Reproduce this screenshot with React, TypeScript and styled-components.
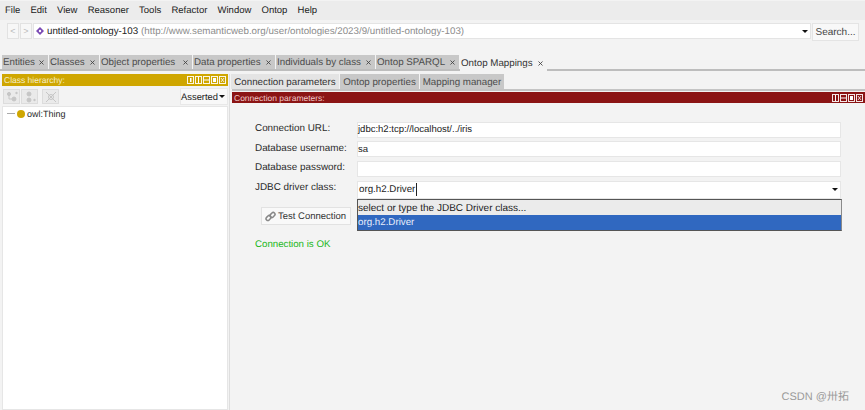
import React from "react";
import styled, { createGlobalStyle } from "styled-components";
import { X } from "lucide-react";

const topTabs = [
  { name: "Entities", width: 46 },
  { name: "Classes", width: 50 },
  { name: "Object properties", width: 92 },
  { name: "Data properties", width: 82 },
  { name: "Individuals by class", width: 99 },
  { name: "Ontop SPARQL", width: 83 },
  { name: "Ontop Mappings", width: 87, active: true },
];

const subTabs = [
  { name: "Connection parameters", width: 108, active: true },
  { name: "Ontop properties", width: 79 },
  { name: "Mapping manager", width: 84 },
];

const GlobalStyle = createGlobalStyle`
  html, body {
    margin: 0;
    padding: 0;
    background: #f3f3f3;
    overflow: hidden;
  }
  * {
    box-sizing: border-box;
  }
`;

const Page = styled.div`
  position: relative;
  width: 865px;
  height: 410px;
  overflow: hidden;
  background: #f3f3f3;
  color: #2a2a2a;
  font-family: "Liberation Sans", Arial, sans-serif;
  font-size: 9.75px;
  text-rendering: geometricPrecision;
  white-space: nowrap;
`;

const MenuBar = styled.div`
  display: flex;
  align-items: center;
  gap: 10.2px;
  height: 19px;
  margin-top: 1px;
  padding-left: 5px;
  background: #ececec;
  font-size: 9.5px;
`;

const MenuItem = styled.span`
  color: #222;
`;

const AddressRow = styled.div`
  display: flex;
  align-items: flex-start;
  height: 18px;
  margin-top: 3px;
  padding-left: 7px;
`;

const NavButton = styled.div`
  display: flex;
  align-items: center;
  justify-content: center;
  width: 12px;
  height: 16px;
  margin-right: 1px;
  border: 1px solid #e2e2e2;
  background: #f7f7f7;
  color: #bbb;
  font-size: 9px;
`;

const AddressField = styled.div`
  display: flex;
  align-items: center;
  width: 778px;
  height: 16px;
  padding-left: 2px;
  border: 1px solid #e4e4e4;
  background: #fff;
`;

const OntologyName = styled.span`
  margin-left: 3px;
  color: #222;
`;

const OntologyUrl = styled.span`
  margin-left: 3px;
  color: #8c8c8c;
`;

const ArrowDown = styled.span`
  width: 0;
  height: 0;
  margin-left: auto;
  margin-right: 2px;
  border-left: 3px solid transparent;
  border-right: 3px solid transparent;
  border-top: 3px solid #111;
`;

const SearchButton = styled.div`
  display: flex;
  align-items: center;
  justify-content: center;
  width: 47px;
  height: 18px;
  margin-left: 1px;
  border: 1px solid #e4e4e4;
  background: #f8f8f8;
  color: #444;
  font-size: 10px;
`;

const TabStrip = styled.div`
  display: flex;
  height: 16px;
  margin-top: 14px;
  padding-left: 2px;
  border-bottom: 2px solid #bdbdbd;
`;

const TopTab = styled.div<{ $active?: boolean }>`
  display: flex;
  align-items: center;
  justify-content: space-between;
  height: ${(p) => (p.$active ? "16px" : "14px")};
  padding: 1px 3px 0 1px;
  margin-right: 1px;
  background: ${(p) => (p.$active ? "#f3f3f3" : "#c8c8c8")};
  color: ${(p) => (p.$active ? "#333" : "#4c4c4c")};
  z-index: 1;
`;

const Body = styled.div`
  display: flex;
  height: 336px;
  margin-top: 3px;
  padding-left: 2px;
`;

const LeftPanel = styled.div`
  display: flex;
  flex-direction: column;
  width: 226px;
`;

const TitleBar = styled.div<{ $color: string; $height: number }>`
  display: flex;
  align-items: center;
  justify-content: space-between;
  height: ${(p) => p.$height}px;
  padding: 0 2px;
  background: ${(p) => p.$color};
  color: ${(p) => (p.$color === "#cfa600" ? "#f5eecb" : "#f0c8c8")};
  font-size: 8.5px;
`;

const WindowButtons = styled.div`
  display: flex;
  gap: 1px;
`;

const ToolRow = styled.div`
  display: flex;
  align-items: center;
  height: 17px;
  margin-top: 2px;
`;

const ToolButton = styled.div<{ $gap: number }>`
  display: flex;
  align-items: center;
  justify-content: center;
  width: 17px;
  height: 15px;
  margin-left: ${(p) => p.$gap}px;
  border: 1px solid #dcdcdc;
  background: #eaeaea;
`;

const ViewSelect = styled.div`
  display: flex;
  align-items: center;
  width: 48px;
  height: 17px;
  margin-left: auto;
  border: 1px solid #e8e8e8;
  background: #f8f8f8;
  color: #222;
  font-size: 9.4px;
`;

const Tree = styled.div`
  flex: 1;
  margin-top: 1px;
  padding: 0 0 0 4px;
  border: 1px solid #e6e6e6;
  background: #fff;
  font-size: 9px;
`;

const TreeRow = styled.div`
  display: flex;
  align-items: center;
  height: 13px;
`;

const TreeLine = styled.span`
  width: 8px;
  height: 1px;
  margin-right: 2px;
  background: #aaa;
`;

const ClassDot = styled.span`
  width: 8px;
  height: 8px;
  margin-right: 2px;
  border-radius: 50%;
  background: #cfa600;
`;

const Divider = styled.div`
  width: 1px;
  margin-left: 1px;
  background: #dedede;
`;

const RightPanel = styled.div`
  flex: 1;
  margin-left: 2px;
  display: flex;
  flex-direction: column;
`;

const SubTabs = styled.div`
  display: flex;
  height: 15px;
  margin-left: -1px;
`;

const SubTab = styled.div<{ $active?: boolean }>`
  display: flex;
  align-items: center;
  justify-content: center;
  padding-top: 2px;
  margin-right: 1px;
  background: ${(p) => (p.$active ? "#e4e4e4" : "#c8c8c8")};
  color: ${(p) => (p.$active ? "#333" : "#4c4c4c")};
`;

const Rule = styled.div`
  height: 2px;
  margin-bottom: 1px;
  background: #c4c4c4;
`;

const Form = styled.div`
  position: relative;
  display: grid;
  grid-template-columns: 102px 484px;
  grid-auto-rows: 19.5px;
  align-items: center;
  margin-top: 17px;
  padding-left: 23px;
`;

const Label = styled.span`
  padding-bottom: 2px;
  color: #2b2b2b;
  font-size: 9.9px;
`;

const Field = styled.div<{ $tall?: boolean }>`
  display: flex;
  align-items: center;
  height: ${(p) => (p.$tall ? "18px" : "16px")};
  margin-top: ${(p) => (p.$tall ? "3px" : "0")};
  padding-left: ${(p) => (p.$tall ? "1px" : "0")};
  border: 1px solid #e6e6e6;
  background: #fff;
  color: #222;
  font-size: ${(p) => (p.$tall ? "9.75px" : "9.5px")};
`;

const Caret = styled.span`
  width: 1px;
  height: 13px;
  margin-left: 1px;
  background: #222;
`;

const Dropdown = styled.div`
  position: absolute;
  left: 125px;
  top: 79px;
  width: 485px;
  height: 32px;
  border: 1px solid #555;
  border-right-color: #8a8a8a;
  background: #ebebeb;
  z-index: 2;
`;

const Option = styled.div<{ $selected?: boolean }>`
  display: flex;
  align-items: center;
  height: 15px;
  padding-top: ${(p) => (p.$selected ? "0" : "1px")};
  background: ${(p) => (p.$selected ? "#3068c0" : "#ebebeb")};
  color: ${(p) => (p.$selected ? "#e8eefa" : "#222")};
  font-size: ${(p) => (p.$selected ? "9.75px" : "10px")};
`;

const TestButton = styled.div`
  display: flex;
  align-items: center;
  gap: 2px;
  width: 90px;
  height: 18px;
  margin: 9px 0 0 29px;
  padding-left: 3px;
  border: 1px solid #e2e2e2;
  background: #f9f9f9;
  color: #333;
  font-size: 9.5px;
`;

const Status = styled.div`
  margin: 13.5px 0 0 23px;
  color: #22b822;
  font-size: 9.7px;
`;

const Watermark = styled.div`
  position: absolute;
  right: 16px;
  bottom: 6px;
  color: #9a9a9a;
  font-family: "Liberation Sans", "Noto Sans CJK SC", sans-serif;
  font-size: 11px;
`;

const IconBox = ({ kind }: { kind: string }) => (
  <svg width="7" height="8" viewBox="0 0 7 8">
    <rect x="0.5" y="0.5" width="6" height="7" fill="none" stroke="#fff" strokeOpacity="0.9" />
    {kind === "v" && <line x1="3.5" y1="1" x2="3.5" y2="7" stroke="#fff" />}
    {kind === "h" && <line x1="1" y1="4" x2="6" y2="4" stroke="#fff" />}
    {kind === "max" && <rect x="2" y="2" width="3" height="4" fill="#fff" />}
    {kind === "x" && <path d="M2 2 L5 6 M5 2 L2 6" stroke="#fff" strokeWidth="0.8" />}
    {kind === "q" && <rect x="3" y="2" width="1.5" height="4" fill="#fff" />}
  </svg>
);

const ToolGlyph = ({ kind }: { kind: string }) => (
  <svg width="14" height="12" viewBox="0 0 14 12" fill="#c6c6c6" stroke="#c6c6c6">
    {kind === "sub" && (
      <>
        <circle cx="4" cy="3" r="1.6" />
        <circle cx="9" cy="8" r="2" />
        <path d="M4 4v4h3M10 2h3M11.5 .8v2.4" fill="none" />
      </>
    )}
    {kind === "sib" && (
      <>
        <circle cx="6" cy="3" r="2" />
        <circle cx="6" cy="9" r="2" />
        <path d="M10 9h3M11.5 7.8v2.4" fill="none" />
      </>
    )}
    {kind === "del" && (
      <>
        <circle cx="7" cy="6" r="2.5" fill="none" />
        <path d="M2 1l10 10M12 1L2 11" fill="none" />
      </>
    )}
  </svg>
);

export default function App() {
  return (
    <Page>
      <GlobalStyle />
      <MenuBar>
        {["File", "Edit", "View", "Reasoner", "Tools", "Refactor", "Window", "Ontop", "Help"].map((m) => (
          <MenuItem key={m}>{m}</MenuItem>
        ))}
      </MenuBar>

      <AddressRow>
        <NavButton>&lt;</NavButton>
        <NavButton>&gt;</NavButton>
        <AddressField>
          <svg width="8" height="8" viewBox="0 0 8 8">
            <path d="M4 0L8 4L4 8L0 4Z" fill="#7b4bb5" />
            <circle cx="4" cy="4" r="1.2" fill="#fff" />
          </svg>
          <OntologyName>untitled-ontology-103</OntologyName>
          <OntologyUrl>(http://www.semanticweb.org/user/ontologies/2023/9/untitled-ontology-103)</OntologyUrl>
          <ArrowDown />
        </AddressField>
        <SearchButton>Search...</SearchButton>
      </AddressRow>

      <TabStrip>
        {topTabs.map((t) => (
          <TopTab key={t.name} $active={t.active} style={{ width: t.width }}>
            {t.name}
            <X size={7} strokeWidth={3} color="#444" />
          </TopTab>
        ))}
      </TabStrip>

      <Body>
        <LeftPanel>
          <TitleBar $color="#cfa600" $height={12}>
            Class hierarchy:
            <WindowButtons>
              {["q", "v", "h", "max", "x"].map((k) => (
                <IconBox key={k} kind={k} />
              ))}
            </WindowButtons>
          </TitleBar>
          <ToolRow>
            <ToolButton $gap={1}>
              <ToolGlyph kind="sub" />
            </ToolButton>
            <ToolButton $gap={1}>
              <ToolGlyph kind="sib" />
            </ToolButton>
            <ToolButton $gap={4}>
              <ToolGlyph kind="del" />
            </ToolButton>
            <ViewSelect>
              Asserted
              <ArrowDown />
            </ViewSelect>
          </ToolRow>
          <Tree>
            <TreeRow>
              <TreeLine />
              <ClassDot />
              owl:Thing
            </TreeRow>
          </Tree>
        </LeftPanel>
        <Divider />
        <RightPanel>
          <SubTabs>
            {subTabs.map((t) => (
              <SubTab key={t.name} $active={t.active} style={{ width: t.width }}>
                {t.name}
              </SubTab>
            ))}
          </SubTabs>
          <Rule />
          <TitleBar $color="#8b1414" $height={11}>
            Connection parameters:
            <WindowButtons>
              {["v", "h", "max", "x"].map((k) => (
                <IconBox key={k} kind={k} />
              ))}
            </WindowButtons>
          </TitleBar>

          <Form>
            <Label>Connection URL:</Label>
            <Field>jdbc:h2:tcp://localhost/../iris</Field>
            <Label>Database username:</Label>
            <Field>sa</Field>
            <Label>Database password:</Label>
            <Field />
            <Label>JDBC driver class:</Label>
            <Field $tall>
              org.h2.Driver
              <Caret />
              <ArrowDown />
            </Field>
            <Dropdown>
              <Option>select or type the JDBC Driver class...</Option>
              <Option $selected>org.h2.Driver</Option>
            </Dropdown>
          </Form>

          <TestButton>
            <svg width="11" height="11" viewBox="0 0 11 11" fill="none" stroke="#888" strokeWidth="1.5">
              <rect x="0.8" y="5.2" width="5.5" height="3.6" rx="1.8" transform="rotate(-45 3.5 7)" />
              <rect x="4.8" y="2.2" width="5.5" height="3.6" rx="1.8" transform="rotate(-45 7.5 4)" />
            </svg>
            Test Connection
          </TestButton>
          <Status>Connection is OK</Status>
        </RightPanel>
      </Body>

      <Watermark>CSDN @卅拓</Watermark>
    </Page>
  );
}
